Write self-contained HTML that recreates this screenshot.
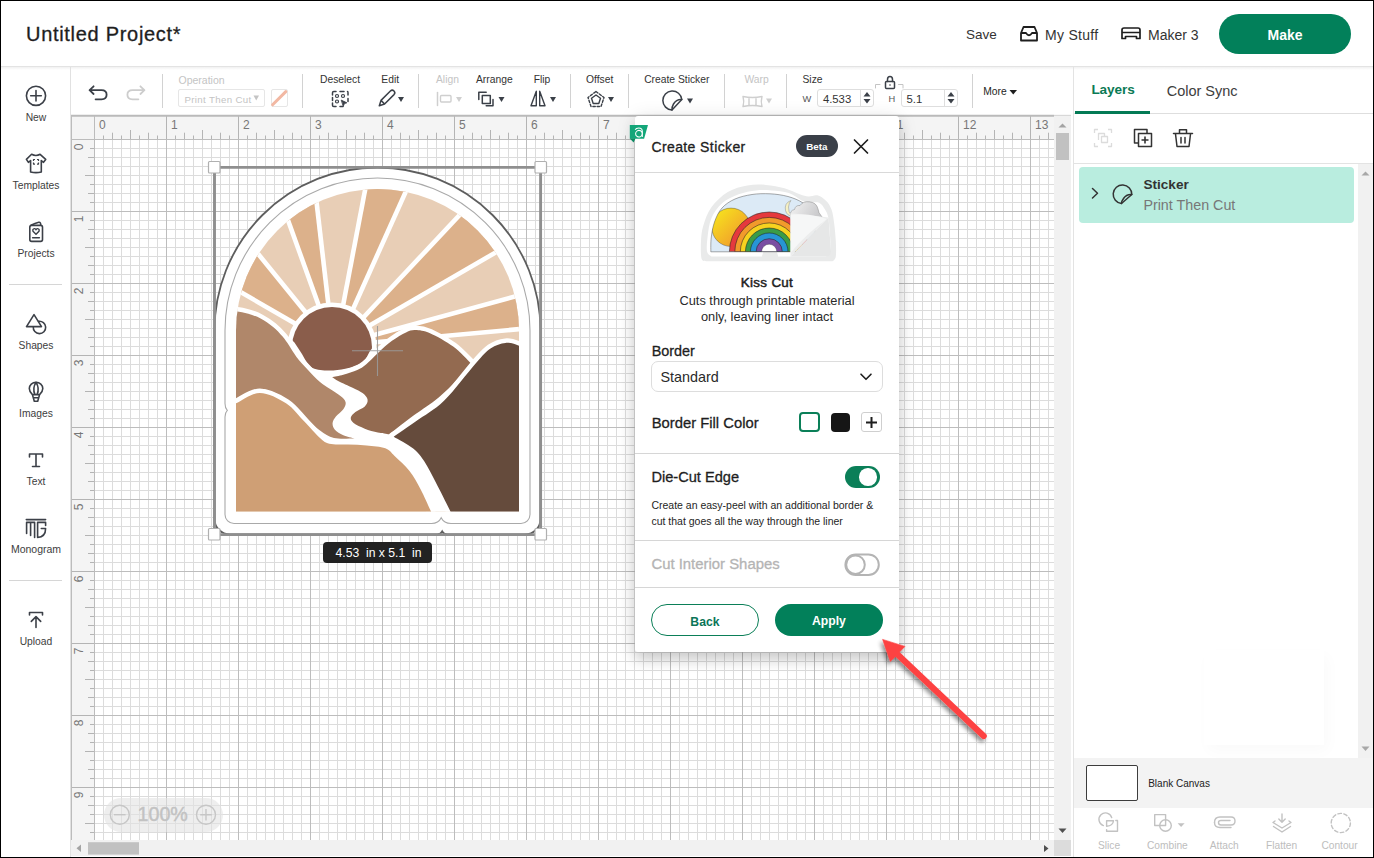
<!DOCTYPE html>
<html><head><meta charset="utf-8">
<style>
*{box-sizing:border-box;margin:0;padding:0}
html,body{width:1374px;height:858px;overflow:hidden;background:#fff}
body{position:relative;font-family:"Liberation Sans",sans-serif;color:#2b2b2b}
.a{position:absolute}
.t{position:absolute;white-space:nowrap;line-height:1}
svg{position:absolute;overflow:visible}
</style></head><body>
<!-- HEADER -->
<div class="a" style="left:0;top:0;width:1374px;height:66px;background:#fff"></div>
<div class="a" style="left:0;top:66px;width:1374px;height:1px;background:#e3e3e3"></div>
<div class="a" style="left:0;top:67px;width:1374px;height:3px;background:linear-gradient(#f1f1f1,#fff)"></div>
<div class="t" id="title" style="left:26px;top:23.7px;font-size:20px;letter-spacing:0.7px;color:#1e1e1e;-webkit-text-stroke:0.3px #1e1e1e">Untitled Project*</div>
<div class="t" style="left:966px;top:27.8px;font-size:13.5px;color:#333">Save</div>
<svg style="left:1019px;top:25px" width="20" height="17" viewBox="0 0 20 17"><path d="M2,8 L4.5,2 L15.5,2 L18,8 L18,15.5 L2,15.5 Z M2,8 L7,8 Q10,12.5 13,8 L18,8" fill="none" stroke="#1e1e1e" stroke-width="1.8" stroke-linejoin="round"/></svg>
<div class="t" style="left:1045px;top:27.8px;font-size:14px;letter-spacing:0.3px;color:#333">My Stuff</div>
<svg style="left:1121px;top:27px" width="20" height="13" viewBox="0 0 20 13"><path d="M3,1 L17,1 Q19,1 19,3 L19,11.5 L15.5,11.5 L15.5,9.5 L4.5,9.5 L4.5,11.5 L1,11.5 L1,3 Q1,1 3,1 Z M1,5.5 L19,5.5" fill="none" stroke="#1e1e1e" stroke-width="1.7" stroke-linejoin="round"/></svg>
<div class="t" style="left:1148px;top:27.8px;font-size:14px;color:#333">Maker 3</div>
<div class="a" style="left:1219px;top:14px;width:132px;height:40px;border-radius:20px;background:#02805a"></div>
<div class="t" style="left:1267.5px;top:27.8px;font-size:14px;font-weight:700;color:#fff">Make</div>

<!-- LEFT SIDEBAR -->
<div class="a" style="left:70px;top:67px;width:1px;height:791px;background:#e1e1e1"></div>
<div class="a" style="left:9px;top:284px;width:53px;height:1px;background:#d6d6d6"></div>
<div class="a" style="left:9px;top:580px;width:53px;height:1px;background:#d6d6d6"></div>
<svg style="left:0;top:0" width="70" height="660" viewBox="0 0 70 660">
<g fill="none" stroke="#3c4048" stroke-width="1.6" stroke-linejoin="round" stroke-linecap="round">
<circle cx="36" cy="95.8" r="9.6"/><path d="M36,90.5 V101 M30.7,95.8 H41.3"/>
<path d="M31.6,154.3 Q35.9,156.6 40.1,154.3 L45.7,159.4 L43.5,162.3 L41.3,160.5 V172 Q36,173.3 30.6,172 V160.5 L28.4,162.3 L26.4,159.4 Z"/>
<path d="M33.5,161 V159.5 H35 M37,159.5 H38.5 V161 M38.5,162.6 V164.1 H37 M35,164.1 H33.5 V162.6" stroke-width="1.2" stroke-linecap="butt"/>
<rect x="29.8" y="225.4" width="12.7" height="16" rx="1.8"/><path d="M31,225.2 Q35,223.2 38.8,222.3 Q40.9,222 40.7,225.2"/>
<path d="M36,234.3 L33,231.2 Q32.3,228.9 34.4,228.6 Q35.6,228.5 36,229.8 Q36.4,228.5 37.6,228.6 Q39.7,228.9 39,231.2 Z" stroke-width="1.4"/>
<path d="M32.6,237.7 H39.4" stroke-width="1.5"/>
<path d="M34,314.6 L26.5,326.6 L41.5,326.6 Z"/><path d="M38.6,321.3 A6.2,6.2 0 1 1 33.3,326.8"/>
<path d="M32.4,394.6 Q29.3,391.8 29.3,388.6 A6.75,6.4 0 0 1 42.8,388.6 Q42.8,391.8 39.6,394.6 Z M36,382.4 Q32.2,388.4 34.9,394.5 M36,382.4 Q39.8,388.4 37.1,394.5 M32.4,394.6 L34.3,401.3 H37.7 L39.6,394.6 M33.3,397.8 H38.7"/>
<path d="M29.5,457 V454 H42.5 V457 M36,454 V466.5 M32.5,466.5 H39.5"/>
<path d="M26.3,519.6 H45.6 M26.6,533.5 V522.4 H34.6 V537.5 M30.6,522.4 V535.5 M45.6,525.5 V522.4 H37.6 V537.5 Q45.6,537 45.6,528.5 H41.3"/>
<path d="M29.5,615 V612.5 H42.5 V615 M36,627.5 V617 M31.3,621.4 L36,616.6 L40.7,621.4"/>
</g></svg>
<div class="t" style="left:1px;width:70px;text-align:center;top:112.5px;font-size:10.3px;color:#3d3d3d">New</div>
<div class="t" style="left:1px;width:70px;text-align:center;top:180.9px;font-size:10.3px;color:#3d3d3d">Templates</div>
<div class="t" style="left:1px;width:70px;text-align:center;top:248.9px;font-size:10.3px;color:#3d3d3d">Projects</div>
<div class="t" style="left:1px;width:70px;text-align:center;top:341.2px;font-size:10.3px;color:#3d3d3d">Shapes</div>
<div class="t" style="left:1px;width:70px;text-align:center;top:408.9px;font-size:10.3px;color:#3d3d3d">Images</div>
<div class="t" style="left:1px;width:70px;text-align:center;top:476.6px;font-size:10.3px;color:#3d3d3d">Text</div>
<div class="t" style="left:1px;width:70px;text-align:center;top:544.0px;font-size:10.5px;color:#3d3d3d">Monogram</div>
<div class="t" style="left:1px;width:70px;text-align:center;top:636.9px;font-size:10.3px;color:#3d3d3d">Upload</div>


<!-- TOOLBAR -->
<!-- separators -->
<div class="a" style="left:162px;top:74px;width:1px;height:34px;background:#d2d2d2"></div>
<div class="a" style="left:302px;top:74px;width:1px;height:34px;background:#d2d2d2"></div>
<div class="a" style="left:418px;top:74px;width:1px;height:34px;background:#d2d2d2"></div>
<div class="a" style="left:570px;top:74px;width:1px;height:34px;background:#d2d2d2"></div>
<div class="a" style="left:628px;top:74px;width:1px;height:34px;background:#d2d2d2"></div>
<div class="a" style="left:724px;top:74px;width:1px;height:34px;background:#d2d2d2"></div>
<div class="a" style="left:786px;top:74px;width:1px;height:34px;background:#d2d2d2"></div>
<div class="a" style="left:972px;top:74px;width:1px;height:34px;background:#d2d2d2"></div>
<!-- labels -->
<div class="t" style="left:178.5px;top:75px;font-size:10.5px;color:#c4c4c4">Operation</div>
<div class="t" style="left:320px;top:75px;font-size:10.3px;color:#333">Deselect</div>
<div class="t" style="left:381.3px;top:75px;font-size:10.3px;color:#333">Edit</div>
<div class="t" style="left:436px;top:75px;font-size:10.3px;color:#c4c4c4">Align</div>
<div class="t" style="left:476px;top:75px;font-size:10.3px;color:#333">Arrange</div>
<div class="t" style="left:533.7px;top:75px;font-size:10.3px;color:#333">Flip</div>
<div class="t" style="left:586px;top:75px;font-size:10.3px;color:#333">Offset</div>
<div class="t" style="left:644.2px;top:75px;font-size:10.3px;color:#333">Create Sticker</div>
<div class="t" style="left:744.4px;top:75px;font-size:10.3px;color:#c4c4c4">Warp</div>
<div class="t" style="left:802.5px;top:75px;font-size:10.3px;color:#333">Size</div>
<!-- operation dropdown -->
<div class="a" style="left:178px;top:89px;width:87px;height:18px;border:1px solid #e6e6e6;border-radius:2px"></div>
<div class="t" style="left:184.4px;top:94.8px;font-size:9.7px;letter-spacing:0.35px;color:#c4c4c4">Print Then Cut</div>
<svg style="left:253px;top:95px" width="7" height="6" viewBox="0 0 7 6"><path d="M0.5,0.5 H6 L3.25,5.5 Z" fill="#c4c4c4"/></svg>
<div class="a" style="left:270.5px;top:89px;width:17px;height:18px;border:1px solid #e6e6e6;border-radius:2px;overflow:hidden"></div>
<svg style="left:270px;top:89px" width="18" height="18" viewBox="0 0 18 18"><path d="M2.6,15.8 L15.8,2.6" stroke="#f2b8a3" stroke-width="3" stroke-linecap="round"/></svg>
<!-- icons -->
<svg style="left:0;top:0" width="1074" height="116" viewBox="0 0 1074 116">
<g fill="none" stroke-linejoin="round" stroke-linecap="round">
<!-- undo -->
<path d="M89.6,90.2 L93.6,86.3 M89.6,90.2 L93.6,94 M89.6,90.2 H101.5 Q106.6,90.2 106.6,94.8 Q106.6,99.3 101.5,99.3 H95.6" stroke="#3b4048" stroke-width="1.8"/>
<!-- redo -->
<path d="M144.4,90.2 L140.4,86.3 M144.4,90.2 L140.4,94 M144.4,90.2 H132.5 Q127.4,90.2 127.4,94.8 Q127.4,99.3 132.5,99.3 H138.4" stroke="#cdcdcd" stroke-width="1.8"/>
<!-- deselect -->
<path d="M332.5,95 V92.8 Q332.5,91.5 333.8,91.5 H336 M340,91.5 H344 M347.5,91.5 Q348,91.5 348,92.8 V95 M348,98.5 V101.5 M336,106.5 H333.8 Q332.5,106.5 332.5,105.2 V103 M332.5,97.5 V100.5 M340,106.5 H343" stroke="#3b4048" stroke-width="1.5"/>
<circle cx="337" cy="96" r="1.5" stroke="#3b4048" stroke-width="1.2"/><circle cx="343" cy="96" r="1.5" stroke="#3b4048" stroke-width="1.2"/><circle cx="337" cy="101.5" r="1.5" stroke="#3b4048" stroke-width="1.2"/>
<path d="M341.6,100.3 L346.8,102.8 L344.4,103.6 L343.4,106 Z" fill="#3b4048" stroke="#3b4048" stroke-width="0.9"/>
<!-- edit pencil -->
<path d="M379.3,105.7 L381,100.4 L390.4,91 Q392.2,89.3 394,91 Q395.7,92.8 394,94.6 L384.6,104 Z M381,100.4 L384.6,104" stroke="#3b4048" stroke-width="1.5"/>
<path d="M398,97 H404 L401,102 Z" fill="#3b4048"/>
<!-- align -->
<path d="M437.5,92.5 V105.5" stroke="#cfcfcf" stroke-width="1.5"/>
<rect x="440.5" y="95.5" width="10.5" height="6.5" rx="1" stroke="#cfcfcf" stroke-width="1.4"/>
<path d="M456,97 H462 L459,102 Z" fill="#cfcfcf"/>
<!-- arrange -->
<path d="M478.8,99.6 V92.2 H486.2" stroke="#3b4048" stroke-width="1.5"/>
<rect x="482.3" y="95.5" width="8" height="8" stroke="#3b4048" stroke-width="1.5"/>
<path d="M493,99.4 V105.8 H486.2" stroke="#3b4048" stroke-width="1.5"/>
<path d="M498.5,97 H504.5 L501.5,102 Z" fill="#3b4048"/>
<!-- flip -->
<path d="M536.3,91.2 L531,105.8 H536.3 Z M539.7,91.2 L545,105.8 H539.7 Z" stroke="#3b4048" stroke-width="1.4"/>
<path d="M550,97 H556 L553,102 Z" fill="#3b4048"/>
<!-- offset -->
<path d="M596,91.5 L604,97.5 L601,106.5 L591,106.5 L588,97.5 Z" stroke="#3b4048" stroke-width="1.4" stroke-dasharray="2.4,1.8"/>
<path d="M596,95 L600.5,98.3 L598.8,103.5 L593.2,103.5 L591.5,98.3 Z" stroke="#3b4048" stroke-width="1.4"/>
<path d="M608,97 H614 L611,102 Z" fill="#3b4048"/>
<!-- create sticker -->
<path d="M681.8,99.5 A9.5,9.5 0 1 0 672,110 Z" stroke="#3b4048" stroke-width="1.5"/>
<path d="M681.8,99.5 Q676.5,99 673.5,104 Q671.5,107.5 672,110" stroke="#3b4048" stroke-width="1.5"/>
<path d="M687,98.5 H693 L690,103.5 Z" fill="#3b4048"/>
<!-- warp -->
<path d="M743,96.5 Q752.5,98.5 762,96.5 Q760.5,101.5 762,106.5 Q752.5,104.5 743,106.5 Q744.5,101.5 743,96.5 Z M749,97.5 V105.5 M756,97.5 V105.5" stroke="#cfcfcf" stroke-width="1.4"/>
<path d="M766,98.5 H772 L769,103.5 Z" fill="#cfcfcf"/>
<!-- lock -->
<rect x="885.5" y="81.5" width="9" height="7" rx="1" stroke="#3b4048" stroke-width="1.5"/>
<path d="M887.5,81.5 V79.5 Q887.5,76.5 890,76.5 Q892.5,76.5 892.5,79.5 V81.5" stroke="#3b4048" stroke-width="1.5"/>
<circle cx="890" cy="85" r="0.8" fill="#3b4048"/>
<path d="M875.5,88 V84.5 H880 M903,88 V84.5 H898.5" stroke="#c4c4c4" stroke-width="1"/>
<!-- more arrow -->
<path d="M1009.5,90 H1017 L1013.25,94.5 Z" fill="#1e1e1e"/>
</g></svg>
<!-- size inputs -->
<div class="t" style="left:802.4px;top:94.6px;font-size:9.3px;color:#555">W</div>
<div class="a" style="left:817px;top:89px;width:57px;height:18px;border:1px solid #dedede;border-radius:3px"></div>
<div class="a" style="left:860px;top:89px;width:1px;height:18px;background:#dedede"></div>
<div class="t" style="left:822.9px;top:93.8px;font-size:11.3px;color:#333">4.533</div>
<svg style="left:863px;top:91px" width="8" height="14" viewBox="0 0 8 14"><path d="M0.5,5.5 H7.5 L4,1 Z M0.5,8 H7.5 L4,12.5 Z" fill="#3b4048"/></svg>
<div class="t" style="left:888.5px;top:94.6px;font-size:9.3px;color:#555">H</div>
<div class="a" style="left:901px;top:89px;width:57px;height:18px;border:1px solid #dedede;border-radius:3px"></div>
<div class="a" style="left:944px;top:89px;width:1px;height:18px;background:#dedede"></div>
<div class="t" style="left:906.5px;top:93.8px;font-size:11.3px;color:#333">5.1</div>
<svg style="left:947px;top:91px" width="8" height="14" viewBox="0 0 8 14"><path d="M0.5,5.5 H7.5 L4,1 Z M0.5,8 H7.5 L4,12.5 Z" fill="#3b4048"/></svg>
<div class="t" style="left:983.2px;top:86.7px;font-size:10.3px;color:#1e1e1e">More</div>


<!-- CANVAS -->
<div class="a" style="left:71px;top:116px;width:1002px;height:741px;background:#fff"></div>
<svg style="left:0;top:0" width="1374" height="858" viewBox="0 0 1374 858"><path d="M103.5,139 V840 M112.5,139 V840 M121.5,139 V840 M130.5,139 V840 M139.5,139 V840 M148.5,139 V840 M157.5,139 V840 M175.5,139 V840 M184.5,139 V840 M193.5,139 V840 M202.5,139 V840 M211.5,139 V840 M220.5,139 V840 M229.5,139 V840 M247.5,139 V840 M256.5,139 V840 M265.5,139 V840 M274.5,139 V840 M283.5,139 V840 M292.5,139 V840 M301.5,139 V840 M319.5,139 V840 M328.5,139 V840 M337.5,139 V840 M346.5,139 V840 M355.5,139 V840 M364.5,139 V840 M373.5,139 V840 M391.5,139 V840 M400.5,139 V840 M409.5,139 V840 M418.5,139 V840 M427.5,139 V840 M436.5,139 V840 M445.5,139 V840 M463.5,139 V840 M472.5,139 V840 M481.5,139 V840 M490.5,139 V840 M499.5,139 V840 M508.5,139 V840 M517.5,139 V840 M535.5,139 V840 M544.5,139 V840 M553.5,139 V840 M562.5,139 V840 M571.5,139 V840 M580.5,139 V840 M589.5,139 V840 M607.5,139 V840 M616.5,139 V840 M625.5,139 V840 M634.5,139 V840 M643.5,139 V840 M652.5,139 V840 M661.5,139 V840 M679.5,139 V840 M688.5,139 V840 M697.5,139 V840 M706.5,139 V840 M715.5,139 V840 M724.5,139 V840 M733.5,139 V840 M751.5,139 V840 M760.5,139 V840 M769.5,139 V840 M778.5,139 V840 M787.5,139 V840 M796.5,139 V840 M805.5,139 V840 M823.5,139 V840 M832.5,139 V840 M841.5,139 V840 M850.5,139 V840 M859.5,139 V840 M868.5,139 V840 M877.5,139 V840 M895.5,139 V840 M904.5,139 V840 M913.5,139 V840 M922.5,139 V840 M931.5,139 V840 M940.5,139 V840 M949.5,139 V840 M967.5,139 V840 M976.5,139 V840 M985.5,139 V840 M994.5,139 V840 M1003.5,139 V840 M1012.5,139 V840 M1021.5,139 V840 M1039.5,139 V840 M1048.5,139 V840 M94,148.5 H1054 M94,157.5 H1054 M94,166.5 H1054 M94,175.5 H1054 M94,184.5 H1054 M94,193.5 H1054 M94,202.5 H1054 M94,220.5 H1054 M94,229.5 H1054 M94,238.5 H1054 M94,247.5 H1054 M94,256.5 H1054 M94,265.5 H1054 M94,274.5 H1054 M94,292.5 H1054 M94,301.5 H1054 M94,310.5 H1054 M94,319.5 H1054 M94,328.5 H1054 M94,337.5 H1054 M94,346.5 H1054 M94,364.5 H1054 M94,373.5 H1054 M94,382.5 H1054 M94,391.5 H1054 M94,400.5 H1054 M94,409.5 H1054 M94,418.5 H1054 M94,436.5 H1054 M94,445.5 H1054 M94,454.5 H1054 M94,463.5 H1054 M94,472.5 H1054 M94,481.5 H1054 M94,490.5 H1054 M94,508.5 H1054 M94,517.5 H1054 M94,526.5 H1054 M94,535.5 H1054 M94,544.5 H1054 M94,553.5 H1054 M94,562.5 H1054 M94,580.5 H1054 M94,589.5 H1054 M94,598.5 H1054 M94,607.5 H1054 M94,616.5 H1054 M94,625.5 H1054 M94,634.5 H1054 M94,652.5 H1054 M94,661.5 H1054 M94,670.5 H1054 M94,679.5 H1054 M94,688.5 H1054 M94,697.5 H1054 M94,706.5 H1054 M94,724.5 H1054 M94,733.5 H1054 M94,742.5 H1054 M94,751.5 H1054 M94,760.5 H1054 M94,769.5 H1054 M94,778.5 H1054 M94,796.5 H1054 M94,805.5 H1054 M94,814.5 H1054 M94,823.5 H1054 M94,832.5 H1054" stroke="#dcdcdc" stroke-width="1" fill="none"/><path d="M94.5,139 V840 M166.5,139 V840 M238.5,139 V840 M310.5,139 V840 M382.5,139 V840 M454.5,139 V840 M526.5,139 V840 M598.5,139 V840 M670.5,139 V840 M742.5,139 V840 M814.5,139 V840 M886.5,139 V840 M958.5,139 V840 M1030.5,139 V840 M94,139.5 H1054 M94,211.5 H1054 M94,283.5 H1054 M94,355.5 H1054 M94,427.5 H1054 M94,499.5 H1054 M94,571.5 H1054 M94,643.5 H1054 M94,715.5 H1054 M94,787.5 H1054" stroke="#bdbdbd" stroke-width="1" fill="none"/></svg>
<div class="a" style="left:71px;top:116px;width:983px;height:23px;background:#f4f4f4"></div>
<div class="a" style="left:71px;top:139px;width:23px;height:701px;background:#f4f4f4"></div>
<svg style="left:0;top:0" width="1374" height="858" viewBox="0 0 1374 858"><path d="M94.5,116 V139 M103.5,135.5 V139 M112.5,132.7 V139 M121.5,135.5 V139 M130.5,130 V139 M139.5,135.5 V139 M148.5,132.7 V139 M157.5,135.5 V139 M166.5,116 V139 M175.5,135.5 V139 M184.5,132.7 V139 M193.5,135.5 V139 M202.5,130 V139 M211.5,135.5 V139 M220.5,132.7 V139 M229.5,135.5 V139 M238.5,116 V139 M247.5,135.5 V139 M256.5,132.7 V139 M265.5,135.5 V139 M274.5,130 V139 M283.5,135.5 V139 M292.5,132.7 V139 M301.5,135.5 V139 M310.5,116 V139 M319.5,135.5 V139 M328.5,132.7 V139 M337.5,135.5 V139 M346.5,130 V139 M355.5,135.5 V139 M364.5,132.7 V139 M373.5,135.5 V139 M382.5,116 V139 M391.5,135.5 V139 M400.5,132.7 V139 M409.5,135.5 V139 M418.5,130 V139 M427.5,135.5 V139 M436.5,132.7 V139 M445.5,135.5 V139 M454.5,116 V139 M463.5,135.5 V139 M472.5,132.7 V139 M481.5,135.5 V139 M490.5,130 V139 M499.5,135.5 V139 M508.5,132.7 V139 M517.5,135.5 V139 M526.5,116 V139 M535.5,135.5 V139 M544.5,132.7 V139 M553.5,135.5 V139 M562.5,130 V139 M571.5,135.5 V139 M580.5,132.7 V139 M589.5,135.5 V139 M598.5,116 V139 M607.5,135.5 V139 M616.5,132.7 V139 M625.5,135.5 V139 M634.5,130 V139 M643.5,135.5 V139 M652.5,132.7 V139 M661.5,135.5 V139 M670.5,116 V139 M679.5,135.5 V139 M688.5,132.7 V139 M697.5,135.5 V139 M706.5,130 V139 M715.5,135.5 V139 M724.5,132.7 V139 M733.5,135.5 V139 M742.5,116 V139 M751.5,135.5 V139 M760.5,132.7 V139 M769.5,135.5 V139 M778.5,130 V139 M787.5,135.5 V139 M796.5,132.7 V139 M805.5,135.5 V139 M814.5,116 V139 M823.5,135.5 V139 M832.5,132.7 V139 M841.5,135.5 V139 M850.5,130 V139 M859.5,135.5 V139 M868.5,132.7 V139 M877.5,135.5 V139 M886.5,116 V139 M895.5,135.5 V139 M904.5,132.7 V139 M913.5,135.5 V139 M922.5,130 V139 M931.5,135.5 V139 M940.5,132.7 V139 M949.5,135.5 V139 M958.5,116 V139 M967.5,135.5 V139 M976.5,132.7 V139 M985.5,135.5 V139 M994.5,130 V139 M1003.5,135.5 V139 M1012.5,132.7 V139 M1021.5,135.5 V139 M1030.5,116 V139 M1039.5,135.5 V139 M1048.5,132.7 V139 M71,139.5 H94 M90,148.5 H94 M88,157.5 H94 M90,166.5 H94 M85,175.5 H94 M90,184.5 H94 M88,193.5 H94 M90,202.5 H94 M71,211.5 H94 M90,220.5 H94 M88,229.5 H94 M90,238.5 H94 M85,247.5 H94 M90,256.5 H94 M88,265.5 H94 M90,274.5 H94 M71,283.5 H94 M90,292.5 H94 M88,301.5 H94 M90,310.5 H94 M85,319.5 H94 M90,328.5 H94 M88,337.5 H94 M90,346.5 H94 M71,355.5 H94 M90,364.5 H94 M88,373.5 H94 M90,382.5 H94 M85,391.5 H94 M90,400.5 H94 M88,409.5 H94 M90,418.5 H94 M71,427.5 H94 M90,436.5 H94 M88,445.5 H94 M90,454.5 H94 M85,463.5 H94 M90,472.5 H94 M88,481.5 H94 M90,490.5 H94 M71,499.5 H94 M90,508.5 H94 M88,517.5 H94 M90,526.5 H94 M85,535.5 H94 M90,544.5 H94 M88,553.5 H94 M90,562.5 H94 M71,571.5 H94 M90,580.5 H94 M88,589.5 H94 M90,598.5 H94 M85,607.5 H94 M90,616.5 H94 M88,625.5 H94 M90,634.5 H94 M71,643.5 H94 M90,652.5 H94 M88,661.5 H94 M90,670.5 H94 M85,679.5 H94 M90,688.5 H94 M88,697.5 H94 M90,706.5 H94 M71,715.5 H94 M90,724.5 H94 M88,733.5 H94 M90,742.5 H94 M85,751.5 H94 M90,760.5 H94 M88,769.5 H94 M90,778.5 H94 M71,787.5 H94 M90,796.5 H94 M88,805.5 H94 M90,814.5 H94 M85,823.5 H94 M90,832.5 H94" stroke="#b4b4b4" stroke-width="1" fill="none"/><path d="M71,115.8 H1054" stroke="#bababa" stroke-width="2"/><path d="M1054,115.8 H1071" stroke="#d8d8d8" stroke-width="2"/><path d="M71.5,116 V840 M94.5,116 V840 M71,139.5 H1054" stroke="#bcbcbc" stroke-width="1"/></svg>
<div class="t" style="left:99px;top:119px;font-size:12px;color:#777">0</div>
<div class="t" style="left:171px;top:119px;font-size:12px;color:#777">1</div>
<div class="t" style="left:243px;top:119px;font-size:12px;color:#777">2</div>
<div class="t" style="left:315px;top:119px;font-size:12px;color:#777">3</div>
<div class="t" style="left:387px;top:119px;font-size:12px;color:#777">4</div>
<div class="t" style="left:459px;top:119px;font-size:12px;color:#777">5</div>
<div class="t" style="left:531px;top:119px;font-size:12px;color:#777">6</div>
<div class="t" style="left:603px;top:119px;font-size:12px;color:#777">7</div>
<div class="t" style="left:675px;top:119px;font-size:12px;color:#777">8</div>
<div class="t" style="left:747px;top:119px;font-size:12px;color:#777">9</div>
<div class="t" style="left:819px;top:119px;font-size:12px;color:#777">10</div>
<div class="t" style="left:891px;top:119px;font-size:12px;color:#777">11</div>
<div class="t" style="left:963px;top:119px;font-size:12px;color:#777">12</div>
<div class="t" style="left:1035px;top:119px;font-size:12px;color:#777">13</div>
<div class="t" style="left:73px;top:141px;width:12px;height:12px;font-size:12px;color:#777;transform:rotate(-90deg);transform-origin:50% 50%;text-align:center">0</div>
<div class="t" style="left:73px;top:213px;width:12px;height:12px;font-size:12px;color:#777;transform:rotate(-90deg);transform-origin:50% 50%;text-align:center">1</div>
<div class="t" style="left:73px;top:285px;width:12px;height:12px;font-size:12px;color:#777;transform:rotate(-90deg);transform-origin:50% 50%;text-align:center">2</div>
<div class="t" style="left:73px;top:357px;width:12px;height:12px;font-size:12px;color:#777;transform:rotate(-90deg);transform-origin:50% 50%;text-align:center">3</div>
<div class="t" style="left:73px;top:429px;width:12px;height:12px;font-size:12px;color:#777;transform:rotate(-90deg);transform-origin:50% 50%;text-align:center">4</div>
<div class="t" style="left:73px;top:501px;width:12px;height:12px;font-size:12px;color:#777;transform:rotate(-90deg);transform-origin:50% 50%;text-align:center">5</div>
<div class="t" style="left:73px;top:573px;width:12px;height:12px;font-size:12px;color:#777;transform:rotate(-90deg);transform-origin:50% 50%;text-align:center">6</div>
<div class="t" style="left:73px;top:645px;width:12px;height:12px;font-size:12px;color:#777;transform:rotate(-90deg);transform-origin:50% 50%;text-align:center">7</div>
<div class="t" style="left:73px;top:717px;width:12px;height:12px;font-size:12px;color:#777;transform:rotate(-90deg);transform-origin:50% 50%;text-align:center">8</div>
<div class="t" style="left:73px;top:789px;width:12px;height:12px;font-size:12px;color:#777;transform:rotate(-90deg);transform-origin:50% 50%;text-align:center">9</div>
<div class="a" style="left:1054px;top:116px;width:17px;height:724px;background:#f1f1f1"></div>
<svg style="left:1054px;top:116px" width="17" height="724" viewBox="0 0 17 724"><path d="M4.5,11.5 H12.5 L8.5,7.5 Z" fill="#a3a3a3"/><rect x="2" y="17" width="13" height="27" fill="#c1c1c1"/><path d="M4.5,712.5 H12.5 L8.5,717 Z" fill="#505050"/></svg>
<div class="a" style="left:71px;top:840px;width:983px;height:16px;background:#f1f1f1"></div>
<svg style="left:71px;top:840px" width="983" height="16" viewBox="0 0 983 16"><path d="M10,4.5 V12 L5.5,8.25 Z" fill="#a3a3a3"/><rect x="17" y="2.2" width="51" height="12.4" fill="#c1c1c1"/><path d="M973,5 V12 L977.5,8.5 Z" fill="#505050"/></svg>
<div class="a" style="left:1054px;top:840px;width:17px;height:16px;background:#dcdcdc"></div>
<div class="a" style="left:1071px;top:116px;width:2px;height:741px;background:#fff"></div>
<div class="a" style="left:1073px;top:67px;width:1px;height:790px;background:#e3e3e3"></div>
<div class="a" style="left:103.5px;top:797.5px;width:119.5px;height:34.5px;border-radius:17px;background:rgba(226,226,226,0.6)"></div>
<svg style="left:0;top:0" width="1374" height="858" viewBox="0 0 1374 858"><g fill="none" stroke="#c6c6c6" stroke-width="1.4"><circle cx="119.8" cy="814.7" r="9.5"/><path d="M114,814.7 H125.6"/><circle cx="206" cy="814.7" r="9.5"/><path d="M200.2,814.7 H211.8 M206,808.9 V820.5"/></g></svg>
<div class="t" style="left:137.5px;top:805px;font-size:19.7px;color:#c2c2c2;-webkit-text-stroke:0.4px #c2c2c2">100%</div>
<svg style="left:0;top:0" width="1374" height="858" viewBox="0 0 1374 858">
<path d="M214.5,330.5 A163,163 0 0 1 540.5,330.5 L540.5,519 A15.5,15.5 0 0 1 525,534.5 L447,534.5 Q443.5,534 442.2,531.5 Q441,534 437.5,534.5 L230,534.5 A15.5,15.5 0 0 1 214.5,519 Z" fill="#fff" stroke="#5e5e5e" stroke-width="1.8"/>
<path d="M225,330.5 A152.5,152.5 0 0 1 530,330.5 L530,514.5 A9,9 0 0 1 521,523.5 L451,523.5 Q444,523.5 441.2,517.8 Q438.5,523.5 431.5,523.5 L234,523.5 A9,9 0 0 1 225,514.5 L225,417 Q225,412.5 227.3,410.3 Q225,408 225,403.5 Z" fill="#fff" stroke="#a9a9a9" stroke-width="1.1"/>
<clipPath id="dclip"><path d="M236,330.5 A141.5,141.5 0 0 1 519,330.5 L519,511.5 L236,511.5 Z"/></clipPath>
<g clip-path="url(#dclip)">
<rect x="226" y="180" width="310" height="340" fill="#fff"/>
<rect x="226" y="180" width="310" height="340" fill="#e8ceb6"/>
<path d="M334.0,346.0 L56.9,186.0 L131.2,97.7 L333.0,346.0 Z" fill="#dcb18b"/>
<path d="M333.3,346.0 L224.9,44.9 L296.4,28.1 L333.2,346.0 Z" fill="#dcb18b"/>
<path d="M335.3,346.0 L395.3,31.7 L467.6,54.1 L336.4,346.0 Z" fill="#dcb18b"/>
<path d="M336.6,346.0 L555.7,112.7 L611.1,185.5 L334.3,346.0 Z" fill="#dcb18b"/>
<path d="M334.0,346.0 L642.7,261.6 L652.7,317.0 L334.0,346.0 Z" fill="#dcb18b"/>
<line x1="334.0" y1="346.0" x2="56.9" y2="186.0" stroke="#fff" stroke-width="4.6"/>
<line x1="333.0" y1="346.0" x2="131.2" y2="97.7" stroke="#fff" stroke-width="4.6"/>
<line x1="333.3" y1="346.0" x2="224.9" y2="44.9" stroke="#fff" stroke-width="4.6"/>
<line x1="333.2" y1="346.0" x2="296.4" y2="28.1" stroke="#fff" stroke-width="4.6"/>
<line x1="335.3" y1="346.0" x2="395.3" y2="31.7" stroke="#fff" stroke-width="4.6"/>
<line x1="336.4" y1="346.0" x2="467.6" y2="54.1" stroke="#fff" stroke-width="4.6"/>
<line x1="336.6" y1="346.0" x2="555.7" y2="112.7" stroke="#fff" stroke-width="4.6"/>
<line x1="334.3" y1="346.0" x2="611.1" y2="185.5" stroke="#fff" stroke-width="4.6"/>
<line x1="334.0" y1="346.0" x2="642.7" y2="261.6" stroke="#fff" stroke-width="4.6"/>
<line x1="334.0" y1="346.0" x2="652.7" y2="317.0" stroke="#fff" stroke-width="4.6"/>
<circle cx="332" cy="347" r="40" fill="#8a5d4b" stroke="#fff" stroke-width="9" stroke-linejoin="round" paint-order="stroke fill"/>
<path d="M226.0,311.0 C227.7,311.0 232.4,310.8 236.1,311.2 C239.8,311.6 244.2,312.5 248.3,313.7 C252.4,314.9 256.5,316.4 260.6,318.6 C264.7,320.8 269.1,323.7 272.8,326.7 C276.5,329.7 279.4,334.2 282.6,336.5 C285.8,338.8 289.1,337.6 292.2,340.2 C295.3,342.8 297.9,347.9 301.0,352.4 C304.1,356.9 306.6,364.0 310.9,367.0 C315.2,370.0 320.9,370.2 326.6,370.5 C332.3,370.8 339.5,370.1 345.3,368.8 C351.1,367.5 358.2,364.6 361.6,362.9 C365.0,361.2 364.2,360.8 365.9,358.5 C367.6,356.2 369.9,349.9 371.9,349.0 C373.9,348.1 374.6,354.3 378.0,352.9 C381.4,351.5 387.3,344.2 392.0,340.8 C396.7,337.4 402.1,334.2 406.0,332.4 C409.9,330.6 411.3,329.9 415.3,330.0 C419.3,330.1 423.7,330.5 430.0,333.3 C436.3,336.1 446.4,341.6 453.2,346.6 C460.0,351.6 467.7,360.2 471.0,363.4 C474.3,366.6 472.2,366.0 473.0,366.0 C473.8,366.0 472.7,366.3 475.6,363.4 C478.5,360.5 485.5,351.9 490.5,348.5 C495.5,345.1 500.8,343.4 505.5,342.9 C510.2,342.4 515.2,344.2 519.0,345.7 C522.8,347.2 526.5,350.9 528.0,352.0 L528,520 L226,520 Z" fill="#fff"/>
<path d="M226.0,311.0 C227.7,311.0 232.4,310.8 236.1,311.2 C239.8,311.6 244.2,312.5 248.3,313.7 C252.4,314.9 256.5,316.4 260.6,318.6 C264.7,320.8 269.1,323.7 272.8,326.7 C276.5,329.7 279.9,333.4 282.6,336.5 C285.3,339.6 286.8,342.1 289.1,345.5 C291.4,348.9 293.4,352.8 296.5,356.9 C299.6,361.0 304.1,365.8 308.0,370.0 C311.9,374.2 316.4,379.0 320.0,382.1 C323.6,385.2 325.9,386.3 329.3,388.6 C332.7,390.9 337.8,393.8 340.5,396.1 C343.2,398.4 345.1,400.0 345.6,402.2 C346.1,404.4 344.9,406.8 343.3,409.2 C341.7,411.6 337.7,414.3 335.9,416.6 C334.1,418.9 332.8,420.9 332.6,423.1 C332.4,425.3 333.1,427.7 334.9,429.7 C336.7,431.7 340.0,433.8 343.3,435.3 C346.6,436.8 352.6,438.0 354.5,438.5 L354.5,438.5 C351.1,438.4 339.8,439.3 334.0,438.0 C328.2,436.7 324.9,434.0 320.0,430.6 C315.1,427.2 310.3,422.8 304.6,417.5 C298.9,412.2 293.5,403.8 286.0,399.0 C278.5,394.2 268.1,389.0 259.8,389.0 C251.5,389.0 241.6,396.8 236.0,399.0 C230.4,401.2 227.7,401.5 226.0,402.0 Z" fill="#b0876a" stroke="#fff" stroke-width="9" stroke-linejoin="round" paint-order="stroke fill"/>
<path d="M332.1,377.0 C334.0,376.6 339.1,375.9 343.3,374.7 C347.5,373.5 353.5,371.7 357.3,370.0 C361.1,368.3 362.6,367.4 366.0,364.5 C369.4,361.6 373.7,356.8 378.0,352.9 C382.3,348.9 387.3,344.2 392.0,340.8 C396.7,337.4 402.1,334.2 406.0,332.4 C409.9,330.6 411.3,329.9 415.3,330.0 C419.3,330.1 423.7,330.5 430.0,333.3 C436.3,336.1 446.4,341.6 453.2,346.6 C460.0,351.6 468.0,360.6 471.0,363.4 C468.0,366.8 459.3,377.7 453.2,383.9 C447.1,390.1 440.8,395.7 434.6,400.7 C428.4,405.7 423.6,408.2 416.0,413.8 C408.4,419.4 393.5,430.9 389.0,434.3 C387.1,434.0 381.8,433.4 377.8,432.5 C373.8,431.6 368.8,430.3 364.8,428.7 C360.8,427.1 355.9,425.0 353.6,423.1 C351.3,421.2 350.5,419.5 350.8,417.6 C351.1,415.8 353.1,413.9 355.4,412.0 C357.7,410.1 362.8,408.4 364.8,406.4 C366.8,404.4 367.9,402.0 367.6,399.8 C367.3,397.6 365.4,395.3 362.9,393.3 C360.4,391.3 356.7,389.7 352.6,387.7 C348.6,385.7 342.0,383.0 338.6,381.2 C335.2,379.4 333.2,377.7 332.1,377.0 Z" fill="#936a50" stroke="#fff" stroke-width="9" stroke-linejoin="round" paint-order="stroke fill"/>
<path d="M393.7,436.7 C397.4,434.1 407.6,427.2 416.0,421.2 C424.4,415.2 434.1,410.3 444.0,400.7 C453.9,391.1 467.9,372.1 475.6,363.4 C483.4,354.7 485.5,351.9 490.5,348.5 C495.5,345.1 500.8,343.4 505.5,342.9 C510.2,342.4 515.2,344.2 519.0,345.7 C522.8,347.2 526.5,350.9 528.0,352.0 L528,520 L450.5,520 L450.5,511.5 C448.0,506.6 440.0,490.3 435.6,482.0 C431.2,473.7 428.1,467.1 424.4,461.5 C420.7,455.9 418.3,452.6 413.2,448.5 C408.1,444.4 396.9,438.7 393.7,436.7 Z" fill="#654b3c" stroke="#fff" stroke-width="9" stroke-linejoin="round" paint-order="stroke fill"/>
<path d="M226.0,407.0 C227.7,406.4 230.4,405.6 236.0,403.2 C241.6,400.8 251.5,392.9 259.8,392.9 C268.1,392.9 278.5,398.4 286.0,403.2 C293.5,408.0 298.9,416.0 304.6,421.8 C310.3,427.6 315.9,434.4 320.0,438.0 C324.1,441.6 324.6,442.6 329.3,443.7 C334.0,444.8 341.8,444.3 348.0,444.6 C354.2,444.9 360.4,444.9 366.6,445.5 C372.8,446.1 380.6,446.6 385.3,448.3 C390.0,450.1 390.6,452.2 394.6,456.0 C398.6,459.8 405.1,465.3 409.5,470.9 C413.9,476.5 417.1,482.7 420.7,489.5 C424.3,496.3 429.3,507.8 431.0,511.5 L431,520 L226,520 Z" fill="#cf9f75" stroke="#fff" stroke-width="9" stroke-linejoin="round" paint-order="stroke fill"/>
</g>
<path d="M214.5,167.4 H540.6 V534.6 H214.5 Z" fill="none" stroke="#8f8f8f" stroke-width="2.9"/>
<g fill="#fff" stroke="#b0b0b0" stroke-width="1.2">
<rect x="208.5" y="161.5" width="11.5" height="11.5" rx="1"/><rect x="535" y="161.5" width="11.5" height="11.5" rx="1"/>
<rect x="208.5" y="528.5" width="11.5" height="11.5" rx="1"/><rect x="535" y="528.5" width="11.5" height="11.5" rx="1"/>
</g>
<path d="M377.5,326 V376 M352,350.8 H403" stroke="#9a9a9a" stroke-width="1.1" opacity="0.9"/>
</svg>
<div class="a" style="left:323px;top:541.8px;width:109px;height:21px;border-radius:4px;background:#222"></div>
<div class="t" style="left:335.5px;top:546.8px;font-size:12.2px;color:#fff;white-space:pre">4.53  in x 5.1  in</div>


<!-- RIGHT PANEL -->
<div class="t" style="left:1091.4px;top:83px;font-size:13.6px;font-weight:700;color:#0b7a55;letter-spacing:-0.1px">Layers</div>
<div class="t" style="left:1166.7px;top:83.5px;font-size:14.5px;color:#3d3d3d">Color Sync</div>
<div class="a" style="left:1074px;top:113px;width:299px;height:1px;background:#dedede"></div>
<div class="a" style="left:1075px;top:111px;width:75px;height:3px;background:#037a55"></div>
<svg style="left:0;top:0" width="1374" height="858" viewBox="0 0 1374 858">
<g fill="none" stroke-linejoin="round">
<path d="M1094.5,133 V129.5 H1098 M1108,129.5 H1111.5 V133 M1111.5,143 V146.5 H1108 M1098,146.5 H1094.5 V143" stroke="#dcdcdc" stroke-width="1.3"/>
<path d="M1098.5,140 V133.5 H1104.5 V136 M1101.5,136.5 H1107.5 V142.5 H1101.5 Z" stroke="#dcdcdc" stroke-width="1.3"/>
<path d="M1138.5,143 H1134.5 V129.5 H1147 V133" stroke="#333" stroke-width="1.5"/>
<rect x="1138.5" y="133.5" width="13" height="13" stroke="#333" stroke-width="1.5"/>
<path d="M1145,136.5 V143.5 M1141.5,140 H1148.5" stroke="#333" stroke-width="1.6"/>
<path d="M1173.5,133.5 H1192.5 M1179.5,133.5 V129.8 H1186.5 V133.5 M1175.5,134 L1177,146.5 H1189 L1190.5,134 M1181,137.5 V143 M1185,137.5 V143" stroke="#333" stroke-width="1.5" stroke-linecap="round"/>
</g></svg>
<div class="a" style="left:1074px;top:163px;width:299px;height:1px;background:#e3e3e3"></div>
<!-- scrollbar -->
<div class="a" style="left:1358px;top:164px;width:15px;height:594px;background:#f1f1f1"></div>
<svg style="left:1358px;top:164px" width="15" height="594" viewBox="0 0 15 594"><path d="M3.5,11.5 H11.5 L7.5,7.5 Z" fill="#a8a8a8"/><path d="M3.5,582.5 H11.5 L7.5,587 Z" fill="#a8a8a8"/></svg>
<!-- layer item -->
<div class="a" style="left:1079px;top:167px;width:275px;height:56px;border-radius:4px;background:#b9eddf"></div>
<svg style="left:0;top:0" width="1374" height="858" viewBox="0 0 1374 858">
<g fill="none" stroke="#333" stroke-width="1.5" stroke-linejoin="round" stroke-linecap="round">
<path d="M1092.5,188.5 L1097.5,193.3 L1092.5,198"/>
<path d="M1131.8,194.5 A9.3,9.3 0 1 0 1121.5,203.5 Z"/>
<path d="M1131.8,194.5 Q1126.5,194 1123.5,198.5 Q1121.3,201.5 1121.5,203.5"/>
</g></svg>
<div class="t" style="left:1143.4px;top:178.2px;font-size:13.6px;font-weight:700;color:#333">Sticker</div>
<div class="t" style="left:1143.4px;top:198px;font-size:14.3px;color:#777">Print Then Cut</div>
<!-- faint shadow box -->
<div class="a" style="left:1204px;top:650px;width:120px;height:95px;box-shadow:4px 6px 14px rgba(0,0,0,0.025)"></div>
<!-- blank canvas -->
<div class="a" style="left:1074px;top:758px;width:299px;height:50px;background:#f3f3f3"></div>
<div class="a" style="left:1085.5px;top:765px;width:52.5px;height:35.5px;background:#fff;border:1.2px solid #3d3d3d;border-radius:2px"></div>
<div class="t" style="left:1148.2px;top:779px;font-size:10px;color:#222">Blank Canvas</div>
<!-- bottom tools -->
<svg style="left:0;top:0" width="1374" height="858" viewBox="0 0 1374 858">
<g fill="none" stroke="#c2c2c2" stroke-width="1.4" stroke-linejoin="round" stroke-linecap="round">
<path d="M1111.7,817.6 A6.5,6.5 0 1 0 1103.4,825.6"/>
<path d="M1106.6,820.7 H1113.5 Q1113,825.7 1106.6,826.3 Z M1115.8,820.5 H1117.5 V831.3 H1106.6 V829.6"/>
<rect x="1154.7" y="814.6" width="10.9" height="10.9"/>
<circle cx="1165.5" cy="825.5" r="5.8"/>
<path d="M1214.5,822.5 Q1214.5,817 1220,817 H1231 Q1235,817 1235,821 Q1235,825 1231,825 H1221 Q1218.5,825 1218.5,822.5 Q1218.5,820.5 1221,820.5 H1230"/>
<path d="M1214.5,822.5 Q1214.5,827.5 1220,827.5 H1231"/>
<path d="M1282,814 V822 M1278.8,819 L1282,822.3 L1285.2,819 M1275,821 L1273,822.5 L1282,828 L1291,822.5 L1289,821 M1273.5,826.5 L1282,832 L1290.5,826.5"/>
<circle cx="1340.8" cy="823" r="9.6" stroke-dasharray="3.6,2.4"/>
</g>
<path d="M1177.6,823.3 H1184.6 L1181.1,827 Z" fill="#c2c2c2"/>
</svg>
<div class="t" style="left:1098px;top:840.8px;font-size:10.2px;color:#bdbdbd">Slice</div>
<div class="t" style="left:1147px;top:840.8px;font-size:10.2px;color:#bdbdbd">Combine</div>
<div class="t" style="left:1209.8px;top:840.8px;font-size:10.2px;color:#bdbdbd">Attach</div>
<div class="t" style="left:1266px;top:840.8px;font-size:10.2px;color:#bdbdbd">Flatten</div>
<div class="t" style="left:1321.4px;top:840.8px;font-size:10.2px;color:#bdbdbd">Contour</div>


<!-- DIALOG -->
<div class="a" style="left:635px;top:115.5px;width:264px;height:536.5px;background:#fff;border-radius:3px;box-shadow:0 8px 14px rgba(0,0,0,0.15),0 2px 20px rgba(0,0,0,0.11)"></div>
<div class="t" style="left:651.4px;top:139.7px;font-size:14px;letter-spacing:0.4px;-webkit-text-stroke:0.3px #1e1e1e;color:#222">Create Sticker</div>
<div class="a" style="left:796px;top:135px;width:42px;height:21.5px;border-radius:11px;background:#3a3f48"></div>
<div class="t" style="left:806.3px;top:141.8px;font-size:9.8px;font-weight:700;color:#fff">Beta</div>
<svg style="left:853px;top:138.5px" width="16" height="15" viewBox="0 0 16 15"><path d="M1.5,1 L14.5,14 M14.5,1 L1.5,14" stroke="#1e1e1e" stroke-width="1.7" stroke-linecap="round"/></svg>
<div class="a" style="left:635px;top:172px;width:264px;height:1px;background:#d9d9d9"></div>
<!--STICKERIMG--><svg style="left:0;top:0" width="1374" height="858" viewBox="0 0 1374 858">
<defs>
<linearGradient id="sung" x1="0" y1="0" x2="1" y2="1"><stop offset="0" stop-color="#f7ec1c"/><stop offset="1" stop-color="#f08a2f"/></linearGradient>
<linearGradient id="cloudg" x1="0" y1="0" x2="1" y2="0.3"><stop offset="0" stop-color="#f4f4f4"/><stop offset="1" stop-color="#c9c9cb"/></linearGradient>
<clipPath id="skyclip"><path d="M710.8,251.8 C710.9,249.5 710.6,243.0 711.2,238.0 C711.8,233.0 712.7,227.0 714.5,222.0 C716.3,217.0 718.6,211.8 722.0,208.0 C725.4,204.2 730.0,201.2 735.0,199.0 C740.0,196.8 746.2,195.4 752.0,194.5 C757.8,193.6 764.0,193.5 770.0,193.8 C776.0,194.1 782.5,195.0 788.0,196.5 C793.5,198.0 799.0,200.2 803.0,203.0 C807.0,205.8 810.0,208.5 812.0,213.0 C814.0,217.5 814.5,223.5 815.0,230.0 C815.5,236.5 815.0,248.2 815.0,251.8 Z"/></clipPath>
<filter id="bbl" x="-10%" y="-10%" width="120%" height="120%"><feGaussianBlur stdDeviation="0.6"/></filter>
</defs>
<path d="M705.9,261.3 C705.2,260.9 702.3,262.0 701.5,258.6 C700.7,255.2 700.7,246.6 701.0,241.1 C701.3,235.6 701.5,231.5 703.2,225.9 C704.9,220.3 707.3,213.0 711.4,207.3 C715.5,201.7 721.8,195.6 727.8,192.0 C733.8,188.4 741.0,186.7 747.4,185.5 C753.8,184.3 759.8,184.5 766.0,184.9 C772.2,185.3 778.9,186.6 784.5,188.2 C790.1,189.8 795.8,192.8 799.8,194.2 C803.8,195.6 805.6,196.2 808.5,196.4 C811.4,196.6 814.4,194.6 817.3,195.3 C820.2,196.0 823.6,198.3 826.0,200.7 C828.4,203.1 830.1,205.7 831.5,209.5 C832.9,213.3 833.5,218.4 834.2,223.7 C834.9,229.0 835.5,235.7 835.8,241.1 C836.1,246.5 836.3,253.0 835.8,256.4 C835.3,259.8 833.1,260.5 832.6,261.3 Z" fill="#e9eaea" filter="url(#bbl)"/>
<path d="M711.4,256.4 C710.7,255.6 707.6,254.8 707.0,251.5 C706.4,248.2 706.9,242.4 707.6,236.8 C708.3,231.2 709.0,223.8 711.4,218.2 C713.8,212.5 717.8,206.9 722.3,202.9 C726.8,198.9 733.1,196.3 738.7,194.2 C744.3,192.1 750.7,191.0 756.1,190.4 C761.5,189.8 765.9,190.0 771.4,190.4 C776.9,190.8 783.8,191.4 788.9,193.1 C794.0,194.8 798.5,199.1 802.0,200.7 C805.5,202.2 806.7,202.0 809.6,202.4 C812.5,202.8 816.9,201.7 819.5,202.9 C822.1,204.1 823.5,207.1 825.0,209.5 C826.5,211.9 827.4,213.3 828.2,217.1 C829.0,220.9 829.4,226.6 829.8,232.4 C830.2,238.2 831.0,248.0 830.4,252.0 C829.8,256.0 826.7,255.7 826.0,256.4 L778,256.4 A6.8,6.8 0 0 0 762.1,256.4 Z" fill="#fff"/>
<g clip-path="url(#skyclip)">
<rect x="705" y="185" width="120" height="70" fill="#dceaf6"/>
<circle cx="731" cy="227.3" r="19.2" fill="url(#sung)" stroke="#444" stroke-width="0.4"/>
<path d="M729.4,251.8 A39.8,39.8 0 0 1 809.0,251.8 Z" fill="#e5393d" stroke="#222" stroke-width="0.55"/><path d="M734.8,251.8 A34.4,34.4 0 0 1 803.6,251.8 Z" fill="#f29a2b" stroke="#222" stroke-width="0.55"/><path d="M740.3,251.8 A28.9,28.9 0 0 1 798.1,251.8 Z" fill="#f7d21f" stroke="#222" stroke-width="0.55"/><path d="M745.4,251.8 A23.8,23.8 0 0 1 793.0,251.8 Z" fill="#3b9c47" stroke="#222" stroke-width="0.55"/><path d="M750.4,251.8 A18.8,18.8 0 0 1 788.0,251.8 Z" fill="#2795d5" stroke="#222" stroke-width="0.55"/><path d="M756.1,251.8 A13.1,13.1 0 0 1 782.3,251.8 Z" fill="#7a4ea2" stroke="#222" stroke-width="0.55"/><path d="M761.6,251.8 A7.6,7.6 0 0 1 776.8,251.8 Z" fill="#ffffff" stroke="#333" stroke-width="0.35"/>
</g>
<path d="M710.8,251.8 C710.9,249.5 710.6,243.0 711.2,238.0 C711.8,233.0 712.7,227.0 714.5,222.0 C716.3,217.0 718.6,211.8 722.0,208.0 C725.4,204.2 730.0,201.2 735.0,199.0 C740.0,196.8 746.2,195.4 752.0,194.5 C757.8,193.6 764.0,193.5 770.0,193.8 C776.0,194.1 782.5,195.0 788.0,196.5 C793.5,198.0 799.0,200.2 803.0,203.0 C807.0,205.8 810.0,208.5 812.0,213.0 C814.0,217.5 814.5,223.5 815.0,230.0 C815.5,236.5 815.0,248.2 815.0,251.8 Z" fill="none" stroke="#555" stroke-width="0.5"/>
<path d="M764.5,251.8 H769" stroke="#fff" stroke-width="0"/>
<path d="M791,200.5 Q784,203 785.5,210.5 Q787,216 792,216 Q788,212 788.5,207 Q789,202.5 791,200.5 Z" fill="#f6f1c4" stroke="#777" stroke-width="0.4"/>
<path d="M790.5,216 Q789.5,210.5 794.5,209.5 Q795.5,205 800,205.5 Q803,201 809.5,201.8 Q816.5,202.5 818,209 Q818.5,213 821,215.5 L823.5,219 L790.5,219 Z" fill="url(#cloudg)" stroke="#7a7a7a" stroke-width="0.45"/>
<path d="M790.5,213 L828.5,217.5 L790.5,256.5 Z" fill="#eceded"/>
<path d="M790.5,214.5 Q806,213.5 818,216.5 L827,219 Q806,234 790.5,253 Z" fill="#f6f7f7"/>
<path d="M828.5,217.5 L831,252 Q830.5,256.5 826,256.5 L790.5,256.5 Z" fill="#e6e7e7"/>
</svg><!--/STICKERIMG-->
<div class="t" style="left:635px;width:264px;text-align:center;top:275.6px;font-size:13.4px;font-weight:400;letter-spacing:0.3px;-webkit-text-stroke:0.5px #1e1e1e;color:#1e1e1e">Kiss Cut</div>
<div class="t" style="left:635px;width:264px;text-align:center;top:294.5px;font-size:12.8px;color:#2a2a2a">Cuts through printable material</div>
<div class="t" style="left:635px;width:264px;text-align:center;top:311px;font-size:12.8px;color:#2a2a2a">only, leaving liner intact</div>
<div class="t" style="left:651.7px;top:343.9px;font-size:14.4px;-webkit-text-stroke:0.3px #1e1e1e;color:#1e1e1e">Border</div>
<div class="a" style="left:651.4px;top:360.5px;width:231.2px;height:31px;border:1px solid #dddddd;border-radius:7px"></div>
<div class="t" style="left:660.4px;top:370px;font-size:14.4px;color:#2a2a2a">Standard</div>
<svg style="left:860px;top:373px" width="12" height="8" viewBox="0 0 12 8"><path d="M1,1.2 L6,6.3 L11,1.2" fill="none" stroke="#1e1e1e" stroke-width="1.6" stroke-linecap="round" stroke-linejoin="round"/></svg>
<div class="t" style="left:651.7px;top:415.8px;font-size:14.8px;-webkit-text-stroke:0.3px #1e1e1e;color:#1e1e1e">Border Fill Color</div>
<div class="a" style="left:799px;top:412.2px;width:20.8px;height:20.2px;border:2px solid #0b7f58;border-radius:4px;background:#fff"></div>
<div class="a" style="left:830.7px;top:412.6px;width:19.3px;height:19.3px;border-radius:4px;background:#161616"></div>
<div class="a" style="left:861px;top:412.2px;width:20.8px;height:20.2px;border:1px solid #cfcfcf;border-radius:3px;background:#fff"></div>
<svg style="left:864px;top:415px" width="15" height="15" viewBox="0 0 15 15"><path d="M7.5,2 V13 M2,7.5 H13" stroke="#1e1e1e" stroke-width="2"/></svg>
<div class="a" style="left:635px;top:453px;width:264px;height:1px;background:#d6d6d6"></div>
<div class="t" style="left:651.4px;top:469.7px;font-size:14.6px;-webkit-text-stroke:0.3px #1e1e1e;color:#1e1e1e">Die-Cut Edge</div>
<div class="a" style="left:844.8px;top:465.8px;width:34.8px;height:22px;border-radius:11px;background:#0b7f58"></div>
<div class="a" style="left:859px;top:468.3px;width:17.5px;height:17.5px;border-radius:50%;background:#fff"></div>
<div class="t" style="left:651.4px;top:499.8px;font-size:10.5px;color:#1e1e1e">Create an easy-peel with an additional border &amp;</div>
<div class="t" style="left:651.4px;top:516.3px;font-size:10.5px;color:#1e1e1e">cut that goes all the way through the liner</div>
<div class="a" style="left:635px;top:540px;width:264px;height:1px;background:#d6d6d6"></div>
<div class="t" style="left:651.4px;top:557px;font-size:14.9px;-webkit-text-stroke:0.3px #b4b4b4;color:#b4b4b4">Cut Interior Shapes</div>
<svg style="left:844px;top:552.5px" width="37" height="24" viewBox="0 0 37 24"><rect x="1.4" y="1.4" width="33.4" height="20.6" rx="10.3" fill="#fff" stroke="#b4b4b4" stroke-width="2"/><circle cx="11.5" cy="11.7" r="9.3" fill="#fff" stroke="#b4b4b4" stroke-width="2"/></svg>
<div class="a" style="left:635px;top:587px;width:264px;height:1px;background:#d6d6d6"></div>
<div class="a" style="left:651px;top:604px;width:107.8px;height:31.7px;border:1.3px solid #0b7f58;border-radius:16px;background:#fff"></div>
<div class="t" style="left:651px;width:107.8px;text-align:center;top:615.7px;font-size:12.2px;font-weight:700;color:#0b7558">Back</div>
<div class="a" style="left:774.7px;top:604px;width:108.4px;height:31.7px;border-radius:16px;background:#02805a"></div>
<div class="t" style="left:774.7px;width:108.4px;text-align:center;top:615.2px;font-size:12.2px;font-weight:700;color:#fff">Apply</div>
<!-- annotation badge -->
<svg style="left:0;top:0" width="1374" height="858" viewBox="0 0 1374 858"><path d="M629.8,125 H648 L644.1,138.8 H629.8 Z" fill="#13a679"/><path d="M629.8,138.6 H635.5 L633.6,142.6 Z" fill="#0c8a62"/><g fill="none" stroke="#fff" stroke-width="1.05"><path d="M642.3,137 V131.3 Q642.3,127.9 638.8,127.9 Q636,127.9 635.2,129.8"/><path d="M642.3,133.6 A3.35,3.3 0 1 0 642.3,133.8"/></g></svg>
<!-- red arrow -->
<svg style="left:0;top:0" width="1374" height="858" viewBox="0 0 1374 858">
<defs><filter id="ash" x="-30%" y="-30%" width="160%" height="160%"><feGaussianBlur in="SourceAlpha" stdDeviation="2.2"/><feOffset dx="-2" dy="3"/><feComponentTransfer><feFuncA type="linear" slope="0.45"/></feComponentTransfer><feMerge><feMergeNode/><feMergeNode in="SourceGraphic"/></feMerge></filter></defs>
<g filter="url(#ash)">
<path d="M897.6,654.5 L983.7,736" stroke="#fd4343" stroke-width="6.2" stroke-linecap="round"/>
<path d="M882.6,639.4 L905,646.4 L899.5,652 L895.5,656.5 L890.3,661.5 Z" fill="#fd4343" stroke="#fd4343" stroke-width="0.6" stroke-linejoin="round"/>
</g></svg>


<!-- OUTER BORDER -->
<div class="a" style="left:0;top:0;width:1374px;height:1px;background:#000"></div>
<div class="a" style="left:0;top:0;width:1px;height:858px;background:#000"></div>
<div class="a" style="left:1373px;top:0;width:1px;height:858px;background:#000"></div>
<div class="a" style="left:0;top:857px;width:1374px;height:1px;background:#000"></div>
</body></html>
